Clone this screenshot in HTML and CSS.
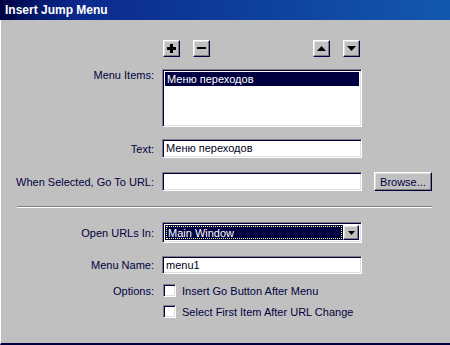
FILE: index.html
```html
<!DOCTYPE html>
<html lang="en">
<head>
  <meta charset="utf-8">
  <title>Insert Jump Menu</title>
  <link rel="stylesheet" href="styles.css">
</head>
<body>
  <div class="dialog">
    <div class="titlebar">Insert Jump Menu</div>

    <div class="content">
      <!-- кнопки добавления / удаления / сортировки -->
      <div class="row row-tools">
        <div class="label"></div>
        <div class="tools">
          <div class="tool-group">
            <button class="btn btn-icon">
              <svg width="9" height="9" viewBox="0 0 9 9"><path d="M3 0h3v3h3v3H6v3H3V6H0V3h3z" fill="#000"/></svg>
            </button>
            <button class="btn btn-icon gap-left">
              <svg width="9" height="9" viewBox="0 0 9 9"><path d="M0 3h9v2H0z" fill="#000"/></svg>
            </button>
          </div>
          <div class="tool-group">
            <button class="btn btn-icon">
              <svg width="9" height="5" viewBox="0 0 9 5"><path d="M4.5 0L9 5H0z" fill="#000"/></svg>
            </button>
            <button class="btn btn-icon gap-left">
              <svg width="9" height="5" viewBox="0 0 9 5"><path d="M0 0h9L4.5 5z" fill="#000"/></svg>
            </button>
          </div>
        </div>
      </div>

      <div class="row row-list">
        <div class="label">Menu Items:</div>
        <div class="listbox sunken">
          <div class="list-item selected">Меню переходов</div>
        </div>
      </div>

      <div class="row row-text">
        <div class="label">Text:</div>
        <div class="field sunken">Меню переходов</div>
      </div>

      <div class="row row-url">
        <div class="label">When Selected, Go To URL:</div>
        <div class="field sunken"></div>
        <button class="btn btn-browse">Browse...</button>
      </div>

      <div class="separator"></div>

      <div class="row row-open">
        <div class="label">Open URLs In:</div>
        <div class="select sunken">
          <div class="select-value"><span class="focus">Main Window</span></div>
          <div class="btn select-arrow">
            <svg width="7" height="4" viewBox="0 0 7 4"><path d="M0 0h7L3.5 4z" fill="#000"/></svg>
          </div>
        </div>
      </div>

      <div class="row row-name">
        <div class="label">Menu Name:</div>
        <div class="field sunken field-short">menu1</div>
      </div>

      <div class="row row-opt1">
        <div class="label">Options:</div>
        <div class="check"><span class="box"></span>Insert Go Button After Menu</div>
      </div>

      <div class="row row-opt2">
        <div class="label"></div>
        <div class="check"><span class="box"></span>Select First Item After URL Change</div>
      </div>
    </div>
  </div>
</body>
</html>
```

FILE: styles.css
```css
body {
  margin: 0;
  padding: 0;
  font-family: "Liberation Sans", Arial, sans-serif;
  font-size: 11px;
  color: #000040;
  background: #c0c0c0;
}

.dialog {
  width: 450px;
  height: 345px;
  display: flex;
  flex-direction: column;
  overflow: hidden;
}

.titlebar {
  height: 20px;
  line-height: 21px;
  padding-left: 5px;
  font-size: 12px;
  font-weight: bold;
  color: #fff;
  background: linear-gradient(to right, #000040 0, #051a70 40px, #0b2a8e 80px, #1258b0 100%);
}

.content {
  flex: 1;
  background: #c0c0c0;
  border-left: 1px solid #fff;
  border-bottom: 2px solid #000040;
  padding-top: 20px;
}

.row {
  display: flex;
  align-items: center;
}

.label {
  width: 153px;
  margin-right: 8px;
  text-align: right;
  white-space: nowrap;
}

/* отступы между строками */
.row-list  { margin-top: 12px; align-items: flex-start; }
.row-list .label { line-height: 13px; padding-top: 0; }
.row-text  { margin-top: 12px; }
.row-url   { margin-top: 14px; }
.row-open  { margin-top: 14px; }
.row-name  { margin-top: 13px; }
.row-opt1  { margin-top: 10px; }
.row-opt2  { margin-top: 8px; }

.sunken {
  box-sizing: border-box;
  background: #fff;
  border: 1px solid;
  border-color: #808080 #fff #fff #808080;
  box-shadow: inset 1px 1px 0 #000040, inset -1px -1px 0 #dfdfdf;
}

.btn {
  box-sizing: border-box;
  padding: 0;
  margin: 0;
  font: inherit;
  color: #000040;
  background: #c0c0c0;
  border: 1px solid;
  border-color: #fff #000040 #000040 #fff;
  box-shadow: inset -1px -1px 0 #808080, inset 1px 1px 0 #dfdfdf;
  display: flex;
  align-items: center;
  justify-content: center;
}

.tools {
  width: 200px;
  display: flex;
  justify-content: space-between;
}

.tool-group {
  display: flex;
  padding-left: 1px;
}

.tool-group + .tool-group {
  padding-left: 0;
  padding-right: 2px;
}

.btn-icon {
  width: 17px;
  height: 17px;
}

.gap-left {
  margin-left: 13px;
}

.listbox {
  width: 200px;
  height: 58px;
  padding: 2px;
}

.list-item {
  height: 14px;
  line-height: 14px;
  padding-left: 2px;
}

.list-item.selected {
  background: #000040;
  color: #fff;
}

.field {
  width: 200px;
  height: 19px;
  line-height: 17px;
  padding-left: 3px;
  color: #000020;
}

.field-short {
  height: 18px;
  line-height: 16px;
}

.btn-browse {
  width: 58px;
  height: 19px;
  margin-left: 12px;
}

.separator {
  margin: 15px 0 0 16px;
  width: 415px;
  height: 1px;
  background: #808080;
  border-bottom: 1px solid #fff;
}

.select {
  width: 200px;
  height: 21px;
  padding: 2px;
  display: flex;
  align-items: stretch;
}

.select-value {
  flex: 1;
  background: #000040;
  color: #fff;
  display: flex;
  padding: 1px;
}

.focus {
  flex: 1;
  border: 1px dotted #ffff80;
  line-height: 13px;
  padding-left: 1px;
}

.select-arrow {
  width: 16px;
}

.check {
  display: flex;
  align-items: center;
  white-space: nowrap;
}

.box {
  width: 13px;
  height: 13px;
  box-sizing: border-box;
  margin-left: 1px;
  margin-right: 6px;
  background: #fff;
  border: 1px solid;
  border-color: #808080 #fff #fff #808080;
  box-shadow: inset 1px 1px 0 #000040, inset -1px -1px 0 #dfdfdf;
}
```
